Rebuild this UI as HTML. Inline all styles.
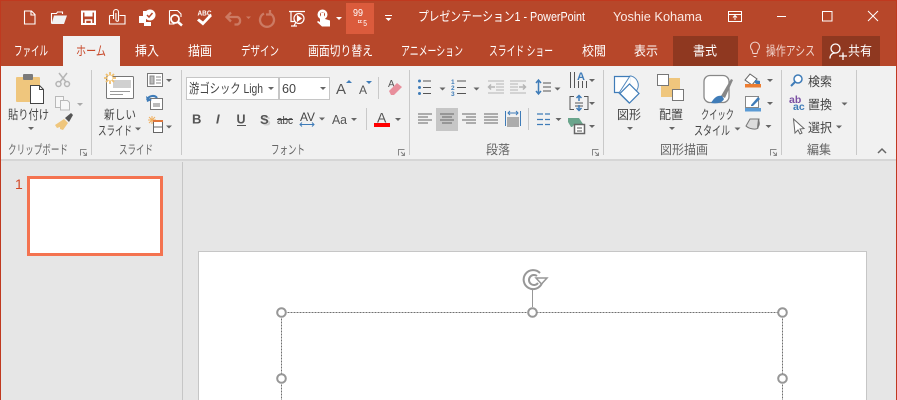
<!DOCTYPE html>
<html lang="ja"><head><meta charset="utf-8"><title>PowerPoint</title>
<style>
html,body{margin:0;padding:0;width:897px;height:400px;overflow:hidden;background:#e6e6e6}
svg{display:block}
text{font-family:"Liberation Sans","Noto Sans CJK JP",sans-serif;font-size:12.5px;fill:#444}
.t text{fill:#fff;font-size:13px}
.s text{font-size:12.5px}
</style></head><body>
<svg width="897" height="400" viewBox="0 0 897 400" xmlns="http://www.w3.org/2000/svg">
<defs>
<path id="a" d="M0 0h6l-3 3z" fill="#666"/>
<path id="l" d="M.5 6.500v-6h6M3 3l3.500 3.500M6.500 3.500v3h-3" fill="none" stroke="#888" stroke-width="1"/>
</defs>
<!-- backgrounds -->
<rect width="897" height="400" fill="#e6e6e6"/>
<rect width="897" height="66" fill="#b7472a"/>
<rect width="897" height="1" fill="#c0391f"/>
<rect y="66" width="897" height="93" fill="#f1f1f1"/>
<rect y="159" width="897" height="2" fill="#d6d6d6"/>
<rect width="1" height="400" fill="#c0391f"/>
<rect x="896" width="1" height="400" fill="#c0391f"/>
<rect x="63" y="36" width="57" height="31" fill="#f1f1f1"/>
<rect x="673" y="36" width="65" height="30" fill="#8f3820"/>
<rect x="822" y="36" width="58" height="30" fill="#8f3820"/>
<rect x="346" y="3" width="28" height="31" fill="#db5b3c"/>

<!-- QAT -->
<g fill="none" stroke="#fff" stroke-width="1.100">
<path d="M24.500 11h7l3.500 3.500v9.500h-10.500zM31 11v4h4"/>
<path d="M51.500 23.500v-10h5l1-1.500h5v2"/><path d="M54 15.500h13l-3 8.500h-12.500z" fill="#f1f1f1" stroke="none"/>
<path d="M82 11.500h13v12.500h-13z" stroke-width="2"/><path d="M85 12v4h7v-4" fill="#fff"/><path d="M85.500 24v-4h6v4" stroke-width="1.500"/>
<path d="M109.500 15.500h4M119.500 15.500h5.500v8.500h-15.500v-8.500"/><path d="M113.500 19v-7a2.200 2.200 0 0 1 5 0v8a1.300 1.300 0 0 1-2.600 0v-7"/>
<path d="M169.500 10.500h8l3.500 3.500v3M169.500 10.500v13.500h5"/><circle cx="175" cy="19" r="4" stroke-width="1.800"/><path d="M178 22l4 3.500" stroke-width="2.500"/>
</g>
<g fill="#fff">
<path d="M139 16h4v-2h3v8h5v4h-7v-3h-5z"/><circle cx="150" cy="15" r="5.500" fill="#fff"/><path d="M147 15l2 2 3.500-4" fill="none" stroke="#b7472a" stroke-width="1.500"/><path d="M143 15v-4h4v2"/>
<path d="M197 20.500l2-2 4 3 7-7.500 2 2-9 9.500z"/>
<path d="M320 16h5v3l5 1.500v6h-8l-5-4.500 1-1 2 1z"/><circle cx="322.500" cy="14.500" r="5"/><circle cx="322.500" cy="14.500" r="2.500" fill="#b7472a"/><rect x="321" y="12.500" width="3" height="8"/>
<path d="M336 17h6l-3 3zM385 15h7v1h-7zM385.500 18h6l-3 3z"/>
</g>
<text x="197.500" y="15.500" textLength="14" lengthAdjust="spacingAndGlyphs" style="font-size:7.500px;font-weight:bold;fill:#fff">ABC</text>
<g fill="none" stroke="#cc7a63" stroke-width="2.300">
<path d="M227 17h10.500a4 4 0 0 1 0 7.500h-3M231 12.500l-4.500 4.500 4.500 4.500"/>
<path d="M264 13.500a7 7 0 1 0 6 0M270 10v4.500h-4"/>
</g>
<path d="M246 16.500h5l-2.500 2.500z" fill="#cc7a63"/>
<g fill="none" stroke="#fff" stroke-width="1.200"><path d="M289 11.500h16M291 11.500v10h4M297 26h-6"/><circle cx="299" cy="18.500" r="5"/><path d="M297.500 16l3.500 2.500-3.500 2.500z" fill="#fff"/><path d="M296 22l-2 4"/></g>
<text x="353" y="16" style="font-size:10.500px;fill:#fff" textLength="10" lengthAdjust="spacingAndGlyphs">99</text>
<text x="357" y="26" style="font-size:8px;fill:#fff" textLength="10" lengthAdjust="spacingAndGlyphs">ᄄ5</text>

<!-- title -->
<g class="t">
<text x="418" y="21" textLength="167" lengthAdjust="spacingAndGlyphs">プレゼンテーション1 - PowerPoint</text>
<text x="613" y="21" textLength="89" lengthAdjust="spacingAndGlyphs" style="fill:#fbe9e4">Yoshie Kohama</text>
<text x="14" y="55.500" textLength="34" lengthAdjust="spacingAndGlyphs">ファイル</text>
<text x="135" y="55.500" textLength="24" lengthAdjust="spacingAndGlyphs">挿入</text>
<text x="188" y="55.500" textLength="24" lengthAdjust="spacingAndGlyphs">描画</text>
<text x="241" y="55.500" textLength="38" lengthAdjust="spacingAndGlyphs">デザイン</text>
<text x="308" y="55.500" textLength="65" lengthAdjust="spacingAndGlyphs">画面切り替え</text>
<text x="401" y="55.500" textLength="62" lengthAdjust="spacingAndGlyphs">アニメーション</text>
<text x="489" y="55.500" textLength="64" lengthAdjust="spacingAndGlyphs">スライド ショー</text>
<text x="582" y="55.500" textLength="24" lengthAdjust="spacingAndGlyphs">校閲</text>
<text x="634" y="55.500" textLength="24" lengthAdjust="spacingAndGlyphs">表示</text>
<text x="693" y="55.500" textLength="24" lengthAdjust="spacingAndGlyphs">書式</text>
<text x="766" y="55.500" textLength="49" lengthAdjust="spacingAndGlyphs" style="fill:#f0d5cd">操作アシス</text>
<text x="848" y="55.500" textLength="24" lengthAdjust="spacingAndGlyphs">共有</text>
</g>
<text x="76" y="55.500" textLength="30" lengthAdjust="spacingAndGlyphs" style="fill:#c8492a;font-size:13px">ホーム</text>
<g fill="none" stroke="#fff" stroke-width="1">
<path d="M728.500 11.500h13v10h-13zM728.500 14.500h13M735 20v-4M733 17.500l2-2 2 2"/>
<path d="M777 16.500h9M822.500 11.500h9.500v9.500h-9.500zM868 11l10 10M878 11l-10 10"/>
<path d="M752 50a4.500 4.500 0 1 1 6 0l-1 3.500h-4zM753.500 56.500h3" stroke="#f0d5cd"/>
<circle cx="835.500" cy="48.500" r="4.500" stroke-width="1.300"/><path d="M830 58.500c0-3.500 2-5.500 5.500-5.500M839 56h8M843 52.500v7.500" stroke-width="1.300"/>
</g>

<!-- separators -->
<g fill="#c9c9c9">
<rect x="91" y="70" width="1" height="85"/><rect x="181" y="70" width="1" height="85"/><rect x="409" y="70" width="1" height="85"/>
<rect x="603" y="70" width="1" height="85"/><rect x="781" y="70" width="1" height="85"/><rect x="856" y="70" width="1" height="85"/>
<rect x="378" y="77" width="1" height="22"/><rect x="366" y="108" width="1" height="22"/><rect x="528" y="108" width="1" height="22"/>
</g>

<!-- clipboard -->
<rect x="16" y="77" width="24" height="25" rx="1" fill="#efc67d"/><rect x="23" y="74" width="10" height="6" rx="1" fill="#7a7a7a"/>
<path d="M30.500 85.500h9l4 4v14h-13z" fill="#fff" stroke="#444"/><path d="M39.500 85.500v4h4" fill="none" stroke="#444"/>
<g fill="none" stroke="#b5b5b5" stroke-width="1.500"><circle cx="58.500" cy="84" r="2.500"/><circle cx="67" cy="84" r="2.500"/><path d="M59 73l7 9M67 73l-7 9"/></g>
<g fill="#f7f7f7" stroke="#b9b9b9"><path d="M55.500 96.500h8v11h-8z"/><path d="M60.500 100.500h7l2 2v7.500h-9z"/></g>
<path d="M77 103h6l-3 3z" fill="#aaa"/>
<path d="M55 125l9-6 4 4-5 7-3-1 0-2-3 1z" fill="#efc67d"/><path d="M65 118l6-5 2 2-4 7z" fill="#555"/>
<text x="8" y="119" textLength="41" lengthAdjust="spacingAndGlyphs">貼り付け</text>
<use href="#a" x="28" y="127"/>
<g class="s">
<text x="8" y="154" textLength="60" lengthAdjust="spacingAndGlyphs" style="fill:#666">クリップボード</text>
<text x="119" y="154" textLength="34" lengthAdjust="spacingAndGlyphs" style="fill:#666">スライド</text>
<text x="271" y="154" textLength="34" lengthAdjust="spacingAndGlyphs" style="fill:#666">フォント</text>
<text x="486" y="154" textLength="24" lengthAdjust="spacingAndGlyphs" style="fill:#666">段落</text>
<text x="660" y="154" textLength="48" lengthAdjust="spacingAndGlyphs" style="fill:#666">図形描画</text>
<text x="807" y="154" textLength="24" lengthAdjust="spacingAndGlyphs" style="fill:#666">編集</text>
</g>
<use href="#l" x="80" y="149"/><use href="#l" x="398" y="149"/><use href="#l" x="592" y="149"/><use href="#l" x="770" y="149"/>

<!-- slides -->
<rect x="106.500" y="76.500" width="27" height="22" rx="1" fill="#fff" stroke="#777"/><rect x="113" y="80" width="18" height="8" fill="#d0d0d0"/><path d="M110 91.500h20M110 94.500h13" stroke="#999"/>
<g stroke="#f0c070" stroke-width="1.800"><path d="M104 78h12M110 72v12M106 74l8 8M114 74l-8 8"/></g><circle cx="110" cy="78" r="2.500" fill="#fff"/>
<text x="104" y="119" textLength="32" lengthAdjust="spacingAndGlyphs">新しい</text>
<text x="98" y="135" textLength="34" lengthAdjust="spacingAndGlyphs">スライド</text>
<use href="#a" x="135" y="127.500"/>
<rect x="147.500" y="73.500" width="15" height="13" fill="#fff" stroke="#777"/><path d="M150 76h4v8h-4zM156 77h5M156 80h5M156 83h5" fill="#bbb" stroke="#888"/>
<use href="#a" x="166" y="79"/>
<rect x="150.500" y="98.500" width="12" height="11" fill="#fff" stroke="#777"/><path d="M147 100c2-5 8-5 10-2" fill="none" stroke="#3f7cb8" stroke-width="2"/><path d="M146 96l1 6 5-2z" fill="#3f7cb8"/><rect x="153" y="103" width="7" height="4" fill="#bbb"/>
<path d="M148 120h8M152 116v8M149 117l6 6M155 117l-6 6" stroke="#f0b060"/><rect x="153.500" y="121.500" width="9" height="11" fill="#fff" stroke="#666"/><path d="M153 121h10" stroke="#e0773c" stroke-width="2"/><path d="M154 127h8" stroke="#666"/>
<use href="#a" x="166" y="125.500"/>

<!-- font -->
<rect x="186.500" y="77.500" width="92" height="22" fill="#fff" stroke="#c6c6c6"/>
<rect x="279.500" y="77.500" width="50" height="22" fill="#fff" stroke="#c6c6c6"/>
<text x="189" y="93" textLength="74" lengthAdjust="spacingAndGlyphs" style="font-size:13px">游ゴシック Ligh</text>
<text x="282" y="93" textLength="14" lengthAdjust="spacingAndGlyphs" style="font-size:13px">60</text>
<use href="#a" x="268" y="87"/><use href="#a" x="320" y="87"/>
<text x="336" y="94" style="font-size:15px;fill:#555">A</text><path d="M346 83h6l-3-3z" fill="#3f7cb8"/>
<text x="359" y="94" style="font-size:12px;fill:#555">A</text><path d="M366 81h6l-3 3z" fill="#3f7cb8"/>
<text x="388" y="87" style="font-size:10px;fill:#555">A</text><path d="M389 91l8-8 5 4-8 8h-3z" fill="#e88f9c"/>
<text x="192" y="123.500" style="font-weight:bold;font-size:13px;fill:#555">B</text>
<text x="216" y="123.500" style="font-weight:bold;font-style:italic;font-size:13px;fill:#555">I</text>
<text x="236.500" y="123.500" style="font-weight:bold;font-size:12.500px;fill:#555">U</text><rect x="237" y="125" width="9" height="1" fill="#555"/>
<text x="262" y="125.500" style="font-weight:bold;font-size:13px;fill:#ccc">S</text>
<text x="260" y="124" style="font-weight:bold;font-size:13px;fill:#555">S</text>
<text x="277" y="124" textLength="16" lengthAdjust="spacingAndGlyphs" style="font-size:11px">abc</text><rect x="277" y="119" width="16" height="1" fill="#444"/>
<text x="300" y="121" textLength="15" lengthAdjust="spacingAndGlyphs" style="font-size:12px">AV</text>
<path d="M300 124.500h14M302 122.500l-2 2 2 2M312 122.500l2 2-2 2" fill="none" stroke="#3f7cb8"/>
<use href="#a" x="319" y="117.500"/>
<text x="332" y="124" textLength="15" lengthAdjust="spacingAndGlyphs" style="font-size:13px;fill:#555">Aa</text>
<use href="#a" x="351" y="118"/>
<text x="377" y="122.500" style="font-size:14px;fill:#555">A</text><rect x="374" y="123" width="16" height="4" fill="#f00"/>
<use href="#a" x="395" y="118"/>

<!-- paragraph -->
<g fill="#3f7cb8"><circle cx="419.500" cy="81" r="1.500"/><circle cx="419.500" cy="87.500" r="1.500"/><circle cx="419.500" cy="93.500" r="1.500"/></g>
<path d="M423 81h8M423 87.500h8M423 93.500h8M457 81h9M457 87.500h9M457 93.500h9" stroke="#555"/>
<text x="451" y="84" style="font-size:6.500px;fill:#3f7cb8;font-weight:bold">1</text><text x="451" y="90" style="font-size:6.500px;fill:#3f7cb8;font-weight:bold">2</text><text x="451" y="96" style="font-size:6.500px;fill:#3f7cb8;font-weight:bold">3</text>
<use href="#a" x="439.500" y="87.500"/><use href="#a" x="473.500" y="87.500"/>
<path d="M488 81h16M496 84h8M496 87h8M496 90h8M488 93h16M510 81h16M510 84h8M510 87h8M510 90h8M510 93h16" stroke="#b5b5b5"/>
<path d="M495 87h-6M491 84.500l-2.500 2.500 2.500 2.500M519 87h6M523 84.500l2.500 2.500-2.500 2.500" stroke="#b5b5b5" fill="none" stroke-width="1.500"/>
<path d="M538.500 81v12M536 83l2.500-3 2.500 3M536 91l2.500 3 2.500-3" stroke="#3f7cb8" fill="none" stroke-width="1.500"/>
<path d="M543 83h8M543 87h8M543 91h8" stroke="#555"/><use href="#a" x="554.500" y="87.500"/>
<path d="M570.500 72v16M574.500 72v16M578.500 81v7M582.500 81v7M586.500 81v7" stroke="#555"/>
<text x="577" y="80" style="font-size:11px;fill:#3f7cb8;font-weight:bold">A</text><use href="#a" x="589" y="79"/>
<path d="M574 96.500h-4v13h4M584 96.500h4v13h-4M575 103h8M575 106h8" stroke="#555" fill="none"/>
<path d="M579 96v5M576.500 98l2.500-2.500 2.500 2.500M579 105v5M576.500 108l2.500 2.500 2.500-2.500" stroke="#3f7cb8" fill="none" stroke-width="1.500"/>
<use href="#a" x="589" y="102"/>
<rect x="436" y="108" width="22" height="23" fill="#c6c6c6"/>
<g stroke="#666" stroke-width="1.100"><path d="M418 114h14M418 117h10M418 120h14M418 123h10"/>
<path d="M440 114h14M442 117h10M440 120h14M442 123h10"/>
<path d="M462 114h14M466 117h10M462 120h14M466 123h10"/>
<path d="M484 114h14M484 117h14M484 120h14M484 123h14"/>
<path d="M507 118h12M507 120h12M507 122h12M507 124h12M507 126h12"/></g>
<path d="M505.500 111v15M520.500 111v15" stroke="#3f7cb8"/><path d="M508 113h10M510 111l-2 2 2 2M516 111l2 2-2 2" stroke="#3f7cb8" fill="none"/>
<path d="M537 114h6M545 114h5M537 119.500h6M545 119.500h5M537 124.500h6M545 124.500h5" stroke="#3f7cb8" stroke-width="1.300"/>
<use href="#a" x="555.500" y="118"/>
<path d="M568 118h11l4 6-8 0-3 3-1 0-3-5z" fill="#6aa58c"/><rect x="574.500" y="124.500" width="10" height="9" fill="#fff" stroke="#666" stroke-width="1.500"/><path d="M577 128h5M577 131h5" stroke="#555"/>
<use href="#a" x="589" y="125"/>

<!-- shapes -->
<path d="M614.500 76.500h16v16h-16z" fill="#fff" stroke="#3f7cb8" stroke-width="1.200"/>
<path d="M631 76a9.500 9.500 0 0 1 6 14l-8 13-10-10 11-17z" fill="#fff" stroke="#3f7cb8" stroke-width="1" opacity=".9"/>
<path d="M629.500 84l9.500 9.500-9.500 9.500-9.500-9.500z" fill="#fff" stroke="#3f7cb8" stroke-width="1.200"/>
<text x="617" y="119" textLength="24" lengthAdjust="spacingAndGlyphs">図形</text><use href="#a" x="627" y="127"/>
<rect x="661" y="78" width="19" height="19" fill="#efc67d"/><rect x="657.500" y="74.500" width="11" height="11" fill="#fff" stroke="#777"/><rect x="672.500" y="89.500" width="11" height="11" fill="#fff" stroke="#777" stroke-width="1"/>
<rect x="661" y="87" width="9" height="10" fill="#efc67d"/>
<text x="659" y="119" textLength="24" lengthAdjust="spacingAndGlyphs">配置</text><use href="#a" x="669" y="127"/>
<rect x="704" y="75.500" width="25" height="27" rx="6" fill="#fff" stroke="#888" stroke-width="1.300"/>
<path d="M721 96l10-17 2 1-8 18z" fill="#888"/><path d="M711 103c3-5 6-8 11-7l2 3c-2 4-7 5-13 4z" fill="#3f7cb8"/>
<text x="701" y="119" textLength="33" lengthAdjust="spacingAndGlyphs">クイック</text>
<text x="694" y="135" textLength="36" lengthAdjust="spacingAndGlyphs">スタイル</text>
<use href="#a" x="734.500" y="127.500"/>
<path d="M750 74l7 5-5 6-7-5z" fill="#fff" stroke="#666"/><path d="M755 80l5 1v4c-2 1-3-1-5-2z" fill="#3f7cb8"/>
<rect x="745" y="84" width="16" height="3.500" fill="#ed7d31"/><use href="#a" x="767" y="79"/>
<rect x="745.500" y="96.500" width="13" height="11" fill="#fff" stroke="#888"/><path d="M751 105l7-8 2 2-7 7h-2z" fill="#3f7cb8"/><rect x="745" y="108" width="16" height="3.500" fill="#5b9bd5"/><use href="#a" x="767" y="102"/>
<path d="M746 126l4-7h9l-1 9c-2 2-9 1-12-2z" fill="#dcdcdc" stroke="#777"/><path d="M758 119c3 3 2 8-1 9l1-9z" fill="#777"/><use href="#a" x="765.500" y="125"/>

<!-- edit -->
<circle cx="798" cy="79" r="4" fill="#fff" stroke="#3f7cb8" stroke-width="1.500"/><path d="M795 82l-4 4" stroke="#3f7cb8" stroke-width="2"/>
<text x="808" y="86" textLength="24" lengthAdjust="spacingAndGlyphs">検索</text>
<text x="789" y="103" style="font-size:10.500px;fill:#7a4fa3;font-weight:bold">ab</text><text x="793" y="110" style="font-size:10.500px;fill:#3f7cb8;font-weight:bold">ac</text>
<text x="808" y="109" textLength="24" lengthAdjust="spacingAndGlyphs">置換</text>
<use href="#a" x="841.500" y="102.500"/>
<path d="M793.500 119l1.500 14 3-3 2 4 2-1-2-4 4-.5z" fill="#fff" stroke="#666"/>
<text x="808" y="132" textLength="24" lengthAdjust="spacingAndGlyphs">選択</text>
<use href="#a" x="836" y="125.500"/>
<path d="M878 153l4-4 4 4" fill="none" stroke="#666" stroke-width="1.500"/>

<!-- main -->
<text x="15" y="189" style="font-size:14px;fill:#d24726">1</text>
<rect x="28.500" y="177.500" width="133" height="77" fill="#fff" stroke="#f47350" stroke-width="3"/>
<rect x="182" y="162" width="1" height="238" fill="#c6c6c6"/>
<rect x="198.500" y="251.500" width="668" height="160" fill="#fff" stroke="#c6c6c6"/>
<rect x="281.500" y="312.500" width="501" height="100" fill="none" stroke="#707070" stroke-dasharray="2 1"/>
<path d="M532.500 290v17" stroke="#979797"/>
<g fill="none" stroke="#979797" stroke-width="2"><path d="M540 273a9.500 9.500 0 1 0 2 10"/><path d="M537 276a5 5 0 1 0 1 7"/></g><path d="M536 278h11l-5.500 6z" fill="#fff" stroke="#979797" stroke-width="1.500"/>
<g fill="#fff" stroke="#979797" stroke-width="2">
<circle cx="281.500" cy="312.500" r="4.300"/><circle cx="532.500" cy="312.500" r="4.300"/><circle cx="782.500" cy="312.500" r="4.300"/>
<circle cx="281.500" cy="378.500" r="4.300"/><circle cx="782.500" cy="378.500" r="4.300"/>
</g>
</svg>
</body></html>
